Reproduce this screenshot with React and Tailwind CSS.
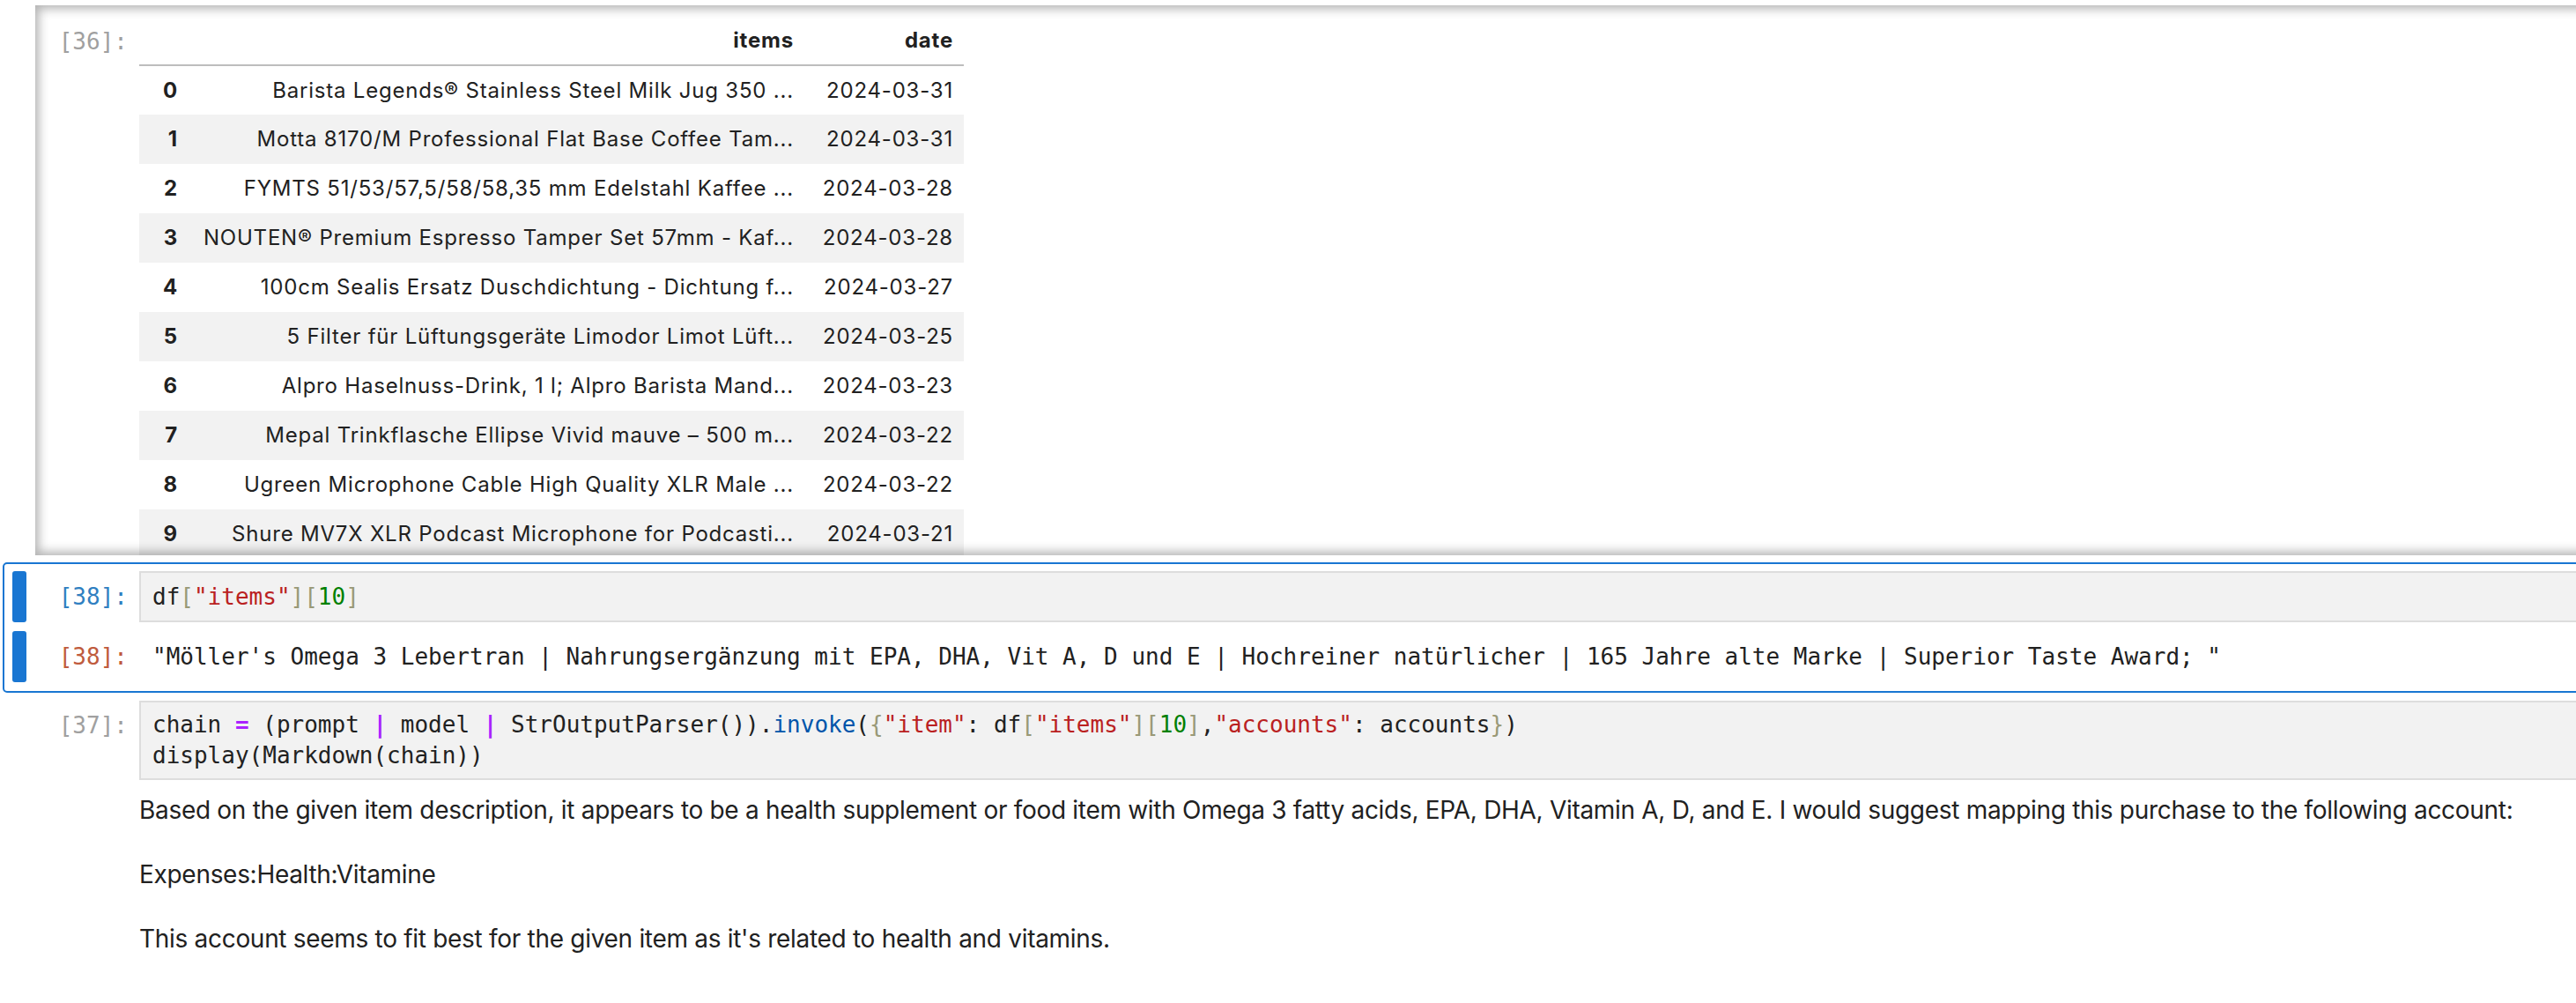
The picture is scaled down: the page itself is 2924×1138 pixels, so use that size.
import React from "react";

const rows = [
  ["0", "Barista Legends® Stainless Steel Milk Jug 350 ...", "2024-03-31"],
  ["1", "Motta 8170/M Professional Flat Base Coffee Tam...", "2024-03-31"],
  ["2", "FYMTS 51/53/57,5/58/58,35 mm Edelstahl Kaffee ...", "2024-03-28"],
  ["3", "NOUTEN® Premium Espresso Tamper Set 57mm - Kaf...", "2024-03-28"],
  ["4", "100cm Sealis Ersatz Duschdichtung - Dichtung f...", "2024-03-27"],
  ["5", "5 Filter für Lüftungsgeräte Limodor Limot Lüft...", "2024-03-25"],
  ["6", "Alpro Haselnuss-Drink, 1 l; Alpro Barista Mand...", "2024-03-23"],
  ["7", "Mepal Trinkflasche Ellipse Vivid mauve – 500 m...", "2024-03-22"],
  ["8", "Ugreen Microphone Cable High Quality XLR Male ...", "2024-03-22"],
  ["9", "Shure MV7X XLR Podcast Microphone for Podcasti...", "2024-03-21"],
];

const mono = "font-['DejaVu_Sans_Mono',monospace] text-[26px] leading-[36px]";

function Prompt({ children, color }) {
  return (
    <div className={`w-[128px] shrink-0 pr-[13px] text-right ${mono} ${color}`}>
      {children}
    </div>
  );
}

const P = "text-[#aa22ff] font-bold";
const S = "text-[#ba2121]";
const N = "text-[#008000]";
const B = "text-[#999977]";
const F = "text-[#0055aa]";

export default function App() {
  return (
    <div className="w-[2924px] h-[1138px] overflow-hidden bg-white text-[#212121] font-['Inter',sans-serif]">
      <div className="w-[2990px]">
        {/* Scrolled output of cell [36] */}
        <div className="pt-[6px] pl-[40px]">
          <div className="relative h-[624px] overflow-hidden">
            <div className="flex">
              <div className="pt-[23px]">
                <div className={`w-[118px] pr-[13px] text-right ${mono} text-[#a0a0a0]`}>[36]:</div>
              </div>
              <div className="pt-[13px]">
                <table className="table-fixed border-collapse w-[936px] text-[24px] tracking-[0.8px]">
                  <colgroup>
                    <col className="w-[56px]" />
                    <col className="w-[699px]" />
                    <col className="w-[181px]" />
                  </colgroup>
                  <thead className="border-b-2 border-[#bdbdbd]">
                    <tr className="h-[55px]">
                      <th className="px-[12px]"></th>
                      <th className="px-[12px] text-right font-bold">items</th>
                      <th className="px-[12px] text-right font-bold">date</th>
                    </tr>
                  </thead>
                  <tbody>
                    {rows.map((r, i) => (
                      <tr key={r[0]} className={`h-[56px] ${i % 2 === 1 ? "bg-[#f2f2f2]" : "bg-white"}`}>
                        <th className="px-[12px] text-right font-bold">{r[0]}</th>
                        <td className="px-[12px] text-right whitespace-nowrap">{r[1]}</td>
                        <td className="px-[12px] text-right whitespace-nowrap">{r[2]}</td>
                      </tr>
                    ))}
                  </tbody>
                </table>
              </div>
            </div>
            <div className="absolute inset-0 pointer-events-none shadow-[inset_0_0_12px_4px_rgba(0,0,0,0.3)]"></div>
          </div>
        </div>

        {/* Cell [38] - selected */}
        <div className="mt-[8px] ml-[3px] border-2 border-[#1976d2] rounded-[5px] pt-[8px]">
          <div className="flex items-stretch">
            <div className="ml-[9px] w-[16px] shrink-0 bg-[#1976d2] rounded-[3px]"></div>
            <div className="flex items-start">
              <div className="pt-[11px]">
                <Prompt color="text-[#307fc1]">[38]:</Prompt>
              </div>
            </div>
            <div className={`flex-1 bg-[#f2f2f2] border-2 border-[#dddddd] pl-[13px] py-[9px] ${mono}`}>
              df<span className={B}>[</span><span className={S}>"items"</span><span className={B}>]</span><span className={B}>[</span><span className={N}>10</span><span className={B}>]</span>
            </div>
          </div>
          <div className="flex items-stretch py-[10px]">
            <div className="ml-[9px] w-[16px] shrink-0 bg-[#1976d2] rounded-[3px]"></div>
            <div className="flex items-center">
              <Prompt color="text-[#bf5b3d]">[38]:</Prompt>
            </div>
            <div className={`flex-1 pl-[15px] py-[11px] whitespace-pre ${mono}`}>
              "Möller's Omega 3 Lebertran | Nahrungsergänzung mit EPA, DHA, Vit A, D und E | Hochreiner natürlicher | 165 Jahre alte Marke | Superior Taste Award; "
            </div>
          </div>
        </div>

        {/* Cell [37] */}
        <div className="mt-[9px] ml-[5px]">
          <div className="flex items-start">
            <div className="ml-[9px] w-[16px] shrink-0"></div>
            <div className="pt-[10px]">
              <Prompt color="text-[#a0a0a0]">[37]:</Prompt>
            </div>
            <div className={`flex-1 bg-[#f2f2f2] border-2 border-[#dddddd] pl-[13px] py-[8px] whitespace-pre font-['DejaVu_Sans_Mono',monospace] text-[26px] leading-[35px]`}>
              <div>
                chain <span className={P}>=</span> (prompt <span className={P}>|</span> model <span className={P}>|</span> StrOutputParser()).<span className={F}>invoke</span>(<span className={B}>{"{"}</span><span className={S}>"item"</span>: df<span className={B}>[</span><span className={S}>"items"</span><span className={B}>]</span><span className={B}>[</span><span className={N}>10</span><span className={B}>]</span>,<span className={S}>"accounts"</span>: accounts<span className={B}>{"}"}</span>)
              </div>
              <div>display(Markdown(chain))</div>
            </div>
          </div>
          <div className="flex">
            <div className="w-[153px] shrink-0"></div>
            <div className="pt-[12px] text-[28px] leading-[44.8px] tracking-[-0.3px] whitespace-nowrap flex flex-col gap-[28px]">
              <p>Based on the given item description, it appears to be a health supplement or food item with Omega 3 fatty acids, EPA, DHA, Vitamin A, D, and E. I would suggest mapping this purchase to the following account:</p>
              <p>Expenses:Health:Vitamine</p>
              <p>This account seems to fit best for the given item as it's related to health and vitamins.</p>
            </div>
          </div>
        </div>
      </div>
    </div>
  );
}
